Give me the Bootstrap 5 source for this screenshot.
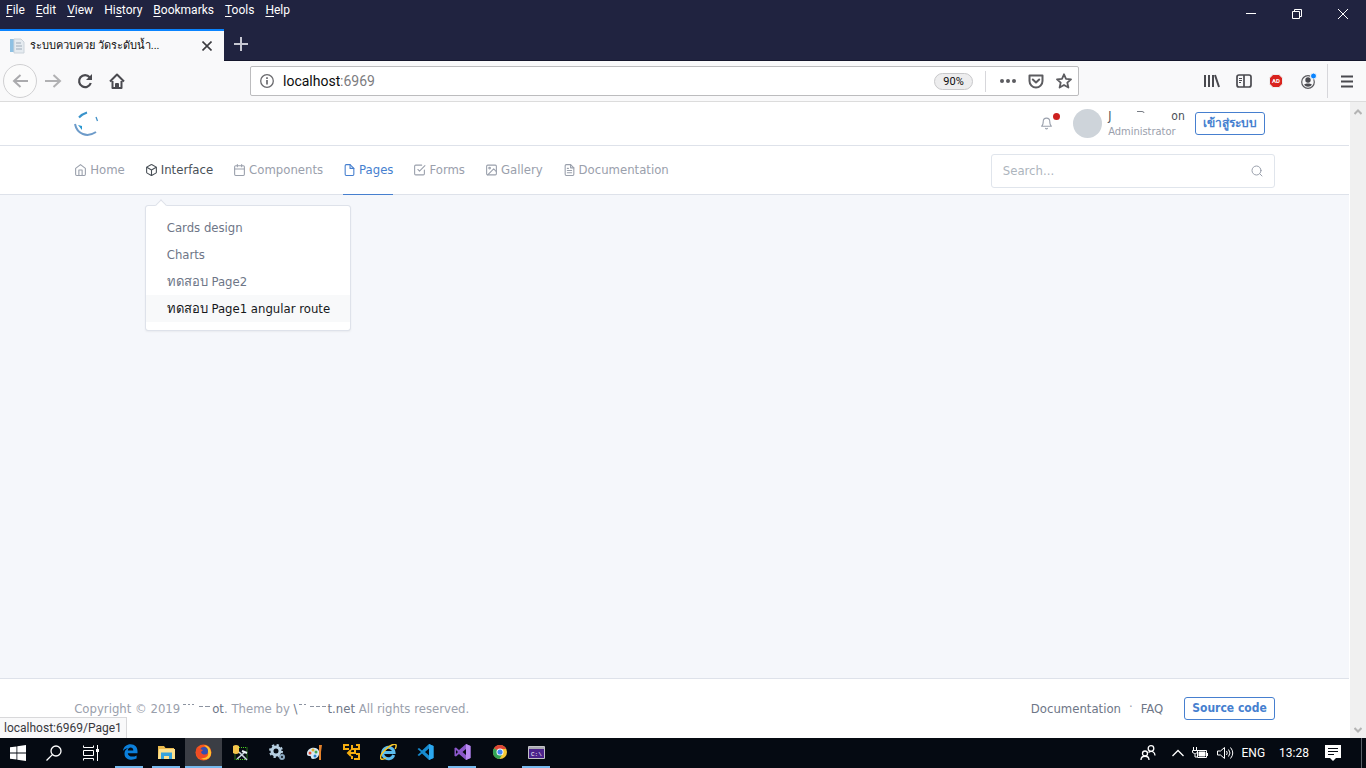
<!DOCTYPE html>
<html lang="en">
<head>
<meta charset="utf-8">
<meta name="viewport" content="width=device-width, initial-scale=1">
<title>ระบบควบควย วัดระดับน้ำ</title>
<link href="https://cdn.jsdelivr.net/npm/bootstrap@5.3.0/dist/css/bootstrap.min.css" rel="stylesheet">
<style>
:root{--ui:Roboto,"Open Sans",sans-serif;--page:"DejaVu Sans Condensed","DejaVu Sans",sans-serif;--blue:#467fcf;--line:#dee2ea;--mute:#9aa0ac;--ink:#6e7687}
body{font-family:var(--ui);font-size:12px;line-height:16px;color:#0c0c0d;overflow:hidden}
button{background:none;border:0;padding:0;color:inherit}
a{color:inherit;text-decoration:none}
svg{display:block;flex:none}
.line-ico{fill:none;stroke:currentColor;stroke-width:2;stroke-linecap:round;stroke-linejoin:round}
.titlebar{background:#202340;color:#fff;border-bottom:1px solid #14162c}
.menus{height:29px;padding:2px 6px;gap:11px}
.menus u{text-underline-offset:2px}
.winctl button{width:46px;height:28px}
.tab-on{width:224px;height:32px;background:#f9f9fa;border-top:2px solid #0a84ff;color:#0c0c0d;margin-bottom:-1px}
.tab-title{font-size:11px}
.new-tab{padding:0 10px}
.toolbar{height:41px;background:#f9f9fa;border-bottom:1px solid #dcdcdc;color:#4a4a4f}
.toolbar button{width:32px;height:32px}
.toolbar .back{width:34px;height:34px;margin-left:3px;border:1px solid #d0d0d2;border-radius:50%;background:#fbfbfb;color:#aaaaad}
.toolbar .forward{color:#b1b1b3}
.toolbar .burger{width:30px}
.tools{margin-left:117px}
.address{height:30px;margin-left:117px;border:1px solid #bcbcbe;border-radius:2px;background:#fff}
.address input{border:0;outline:0;min-width:0;font-size:14px;color:#0c0c0d;background:none;width:57px;padding:0}
.port{font-size:14px;color:#7c7c80}
.address button{width:28px;height:28px;color:#5c5c60}
.address .zoom-pill{width:39px;height:17px;border:1px solid #c8c8ca;border-radius:9px;background:#ededee;color:#0c0c0d;font-size:11px;line-height:15px}
.rule{width:1px;background:#d7d7db}
.tall{height:34px;margin-left:3px}
.viewport-area{font-family:var(--page);font-size:13px;color:#495057;background:#f5f7fb;min-height:0}
.wrap{max-width:1201px;width:89%;margin:0 auto}
.top-bar{height:44px;background:#fff;border-bottom:1px solid var(--line)}
.menu-bar{height:49px;background:#fff;border-bottom:1px solid var(--line)}
.main-nav{gap:20px;color:var(--mute)}
.main-nav .item{height:49px;gap:3px;border-bottom:1px solid transparent}
.main-nav .current{color:var(--blue);border-color:var(--blue)}
.main-nav .hovered{color:#495057}
.sub-menu{width:206px;top:59px;left:0;padding:8px 0;margin:0;border:1px solid var(--line);border-radius:3px;font-size:13px;box-shadow:0 1px 2px rgba(0,0,0,.05);color:var(--ink)}
.sub-menu a{display:block;height:27px;line-height:27px;padding:0 21px;white-space:nowrap}
.sub-menu a.over{background:#f8f9fa;color:#16181b}
.sub-menu::before{content:"";position:absolute;left:11px;top:-5px;width:8px;height:8px;background:#fff;border:solid var(--line);border-width:1px 0 0 1px;transform:rotate(45deg)}
.find{width:284px;height:34px;border:1px solid #e0e5ec;border-radius:3px;padding:0 11px}
.find input{border:0;outline:0;min-width:0;padding:0;color:#495057;font-size:13px}
.find input::placeholder{color:#adb5bd}
.gray{color:#9aa0ac}
.user{gap:6px;font-size:12px;line-height:15px}
.user small{font-size:11px;color:var(--mute);display:block}
.avatar-dot{width:29px;height:29px;background:#ced4da}
.alert-dot{width:7px;height:7px;background:#cd201f;right:-7px;top:-4px}
.edge-btn{height:23px;border:1px solid var(--blue);border-radius:3px;color:var(--blue);font-size:12px;font-weight:700;line-height:21px;padding:0 7px}
.sign-in{margin:0 10px}
.source{margin-left:21px}
.foot{height:60px;background:#fff;border-top:1px solid var(--line);color:var(--mute)}
.foot a{color:var(--ink)}
.hint{left:0;bottom:0;height:21px;line-height:21px;background:#f9f9fa;border:1px solid #d8d8da;border-width:1px 1px 0 0;padding:0 4px;font-family:var(--ui);font-size:12px;color:#38383d}
.scroller{width:17px;background:#f0f0f0;border-left:1px solid #fff;color:#b4b4b4;padding:6px 0 4px}
.taskbar{height:30px;background:#050a12;color:#fff}
.taskbar .sys{width:36px;height:30px}
.taskbar .apps{margin-left:3px}
.taskbar .app{width:37px;height:30px;border-bottom:2px solid transparent;position:relative}
.taskbar .app.open::after{content:"";position:absolute;left:4px;right:5px;bottom:-2px;height:2px;background:#76b9ed}
.taskbar .app.active{background:#3b3e45}
.taskbar .app.active::after{left:0;right:0}
.taskbar .app svg,.taskbar .sys svg{margin:0 auto}
.tray .clock{margin-left:14px}
.tray .peek{height:30px;margin:0 4px 0 20px;background:#596068}
</style>
</head>
<body class="vh-100 d-flex flex-column">
<svg width="0" height="0" class="position-absolute" aria-hidden="true">
<symbol id="home" viewBox="0 0 24 24"><path d="M3 9l9-7 9 7v11a2 2 0 0 1-2 2H5a2 2 0 0 1-2-2z"/><path d="M9 22V12h6v10"/></symbol>
<symbol id="box" viewBox="0 0 24 24"><path d="M21 16V8a2 2 0 0 0-1-1.73l-7-4a2 2 0 0 0-2 0l-7 4A2 2 0 0 0 3 8v8a2 2 0 0 0 1 1.73l7 4a2 2 0 0 0 2 0l7-4A2 2 0 0 0 21 16z"/><path d="M3.3 7L12 12l8.7-5M12 22V12"/></symbol>
<symbol id="cal" viewBox="0 0 24 24"><rect x="3" y="4" width="18" height="18" rx="2"/><path d="M16 2v4M8 2v4M3 10h18"/></symbol>
<symbol id="file" viewBox="0 0 24 24"><path d="M13 2H6a2 2 0 0 0-2 2v16a2 2 0 0 0 2 2h12a2 2 0 0 0 2-2V9z"/><path d="M13 2v7h7"/></symbol>
<symbol id="check" viewBox="0 0 24 24"><path d="M9 11l3 3L22 4"/><path d="M21 12v7a2 2 0 0 1-2 2H5a2 2 0 0 1-2-2V5a2 2 0 0 1 2-2h11"/></symbol>
<symbol id="pic" viewBox="0 0 24 24"><rect x="3" y="3" width="18" height="18" rx="2"/><circle cx="8.500" cy="8.500" r="1.500"/><path d="M21 15l-5-5L5 21"/></symbol>
<symbol id="doc" viewBox="0 0 24 24"><path d="M14 2H6a2 2 0 0 0-2 2v16a2 2 0 0 0 2 2h12a2 2 0 0 0 2-2V8z"/><path d="M14 2v6h6M16 13H8M16 17H8M10 9H8"/></symbol>
</svg>

<header class="titlebar">
  <div class="d-flex justify-content-between">
    <nav class="menus d-flex" aria-label="Application menu">
      <a href="#"><u>F</u>ile</a><a href="#"><u>E</u>dit</a><a href="#"><u>V</u>iew</a><a href="#">Hi<u>s</u>tory</a><a href="#"><u>B</u>ookmarks</a><a href="#"><u>T</u>ools</a><a href="#"><u>H</u>elp</a>
    </nav>
    <div class="winctl d-flex">
      <button aria-label="Minimize"><svg class="mx-auto" width="10" height="10" stroke="#fff"><path d="M0 4.500h10"/></svg></button>
      <button aria-label="Restore"><svg class="mx-auto" width="11" height="11" fill="none" stroke="#fff"><path d="M.5 2.500h7v7h-7zM2.500 2.500v-2h7v7h-2"/></svg></button>
      <button aria-label="Close"><svg class="mx-auto" width="11" height="11" stroke="#fff"><path d="M0 0l10 10M10 0L0 10"/></svg></button>
    </div>
  </div>
  <div class="d-flex align-items-center">
    <div class="tab-on d-flex align-items-center ps-2 pe-2">
      <svg class="me-1" width="18" height="18"><path d="M2 2h4v13H2z" fill="#8fc1e3"/><path d="M6 2h7l3 3v11H6z" fill="#e5ebf0" stroke="#cbd3da"/><path d="M8 6h5M8 9h6M8 12h6" stroke="#9eabb8"/></svg>
      <span class="tab-title flex-grow-1 text-nowrap">ระบบควบควย วัดระดับน้ำ...</span>
      <button class="p-1" aria-label="Close tab"><svg width="10" height="10" stroke="#3c3c40" stroke-width="1.600"><path d="M.5.5l9 9M9.500.5l-9 9"/></svg></button>
    </div>
    <button class="new-tab" aria-label="New tab"><svg width="15" height="15" stroke="#c6c7d2" stroke-width="2"><path d="M0 7h14M7 0v14"/></svg></button>
  </div>
</header>

<div class="toolbar d-flex align-items-center">
  <button class="back d-flex align-items-center justify-content-center" aria-label="Back"><svg width="17" height="16" fill="none" stroke="currentColor" stroke-width="2"><path d="M16 8H2M8.500 2L2 8l6.500 6"/></svg></button>
  <button class="forward d-flex align-items-center justify-content-center" aria-label="Forward"><svg width="17" height="16" fill="none" stroke="currentColor" stroke-width="2"><path d="M0 8h15M8.500 2L15 8l-6.500 6"/></svg></button>
  <button class="d-flex align-items-center justify-content-center" aria-label="Reload"><svg width="16" height="16" fill="none" stroke="currentColor" stroke-width="2.200"><path d="M12.700 4.200A6 6 0 1 0 13.800 10"/><path d="M15 1v6H9z" fill="currentColor" stroke="none"/></svg></button>
  <button class="d-flex align-items-center justify-content-center" aria-label="Home page"><svg width="16" height="16" fill="none" stroke="currentColor" stroke-width="2" stroke-linejoin="round"><path d="M1 8.500L8 1.500l7 7M3.500 8v7h9V8M7 15v-4h2v4"/></svg></button>
  <form class="address d-flex align-items-center flex-grow-1 ps-2" onsubmit="return false">
    <svg width="16" height="16"><circle cx="8" cy="8" r="6.300" fill="none" stroke="#6a6a6e" stroke-width="1.300"/><path d="M8 7v4.500M8 4.200v1.800" stroke="#6a6a6e" stroke-width="1.700"/></svg>
    <input class="ms-2" type="text" value="localhost" aria-label="Address"><span class="port flex-grow-1">:6969</span>
    <button class="zoom-pill me-2" type="button">90%</button>
    <span class="rule h-75 ms-1 me-2"></span>
    <button class="d-flex align-items-center justify-content-center" type="button" aria-label="Page actions"><svg width="16" height="6" fill="currentColor"><circle cx="2" cy="3" r="2"/><circle cx="8" cy="3" r="2"/><circle cx="14" cy="3" r="2"/></svg></button>
    <button class="d-flex align-items-center justify-content-center" type="button" aria-label="Pocket"><svg width="16" height="15" fill="none" stroke="currentColor" stroke-width="2" stroke-linejoin="round" stroke-linecap="round"><path d="M1.500 1.500h13V7a6.500 6.500 0 0 1-13 0zM4.800 5.500L8 8.500l3.200-3"/></svg></button>
    <button class="d-flex align-items-center justify-content-center" type="button" aria-label="Bookmark"><svg width="16" height="16" fill="none" stroke="currentColor" stroke-width="1.800" stroke-linejoin="round"><path d="M8 1.300l2 4.500 5 .5-3.700 3.300 1.100 4.900L8 12l-4.400 2.500 1.100-4.900L1 6.300l5-.5z"/></svg></button>
  </form>
  <div class="tools d-flex align-items-center">
    <button class="d-flex align-items-center justify-content-center" aria-label="Library"><svg width="16" height="14" fill="none" stroke="currentColor" stroke-width="2"><path d="M1 1v12M5 1v12M9 1v12M11 1l4 12"/></svg></button>
    <button class="d-flex align-items-center justify-content-center" aria-label="Sidebars"><svg width="16" height="14" fill="none" stroke="currentColor" stroke-width="1.700"><rect x="1" y="1" width="14" height="12" rx="2"/><path d="M8 1v12"/><path d="M3 4.500h3M3 6.500h3M3 8.500h2" stroke-width="1"/></svg></button>
    <button class="d-flex align-items-center justify-content-center" aria-label="Ad blocker"><svg width="14" height="14"><path d="M4 .5h6L13.500 4v6L10 13.500H4L.5 10V4z" fill="#d9231e" stroke="#eee"/><text x="7" y="9" font-size="6" font-weight="700" fill="#fff" text-anchor="middle">AD</text></svg></button>
    <button class="d-flex align-items-center justify-content-center" aria-label="Account"><svg width="17" height="17"><circle cx="8" cy="9" r="6.300" fill="none" stroke="#5a5a5e" stroke-width="1.200"/><circle cx="8" cy="7" r="2.700" fill="#4a4a4f"/><path d="M4 11.500c2-1.500 6-1.500 8 0-2 3-6 3-8 0z" fill="#4a4a4f"/><circle cx="13.500" cy="3" r="3" fill="#0a84ff" stroke="#f9f9fa"/></svg></button>
    <span class="rule tall"></span>
    <button class="burger d-flex align-items-center justify-content-center mx-1" aria-label="Open menu"><svg width="12" height="13" stroke="currentColor" stroke-width="2"><path d="M0 1.500h12M0 6.500h12M0 11.500h12"/></svg></button>
  </div>
</div>

<div class="viewport-area d-flex flex-grow-1 position-relative">
  <div class="flex-grow-1 d-flex flex-column">
    <div class="top-bar">
      <div class="wrap h-100 d-flex align-items-center justify-content-between">
        <a href="#" aria-label="Brand"><svg width="26" height="26" fill="none"><path d="M5 6.500Q8 3 13 1.500" stroke="#3a93cb" stroke-width="2"/><path d="M1 13c2 10 12 14 21 8" stroke="#6d9bc9" stroke-width="2"/><path d="M4 14l4 5v-4z" fill="#2997d0"/><path d="M22 6l1.500 4" stroke="#4090c8" stroke-width="1.300"/></svg></a>
        <div class="d-flex align-items-center">
          <a href="#" class="position-relative me-3" aria-label="Notifications"><svg class="line-ico gray" width="13" height="13" viewBox="0 0 24 24"><path d="M18 8A6 6 0 0 0 6 8c0 7-3 9-3 9h18s-3-2-3-9M13.700 21a2 2 0 0 1-3.400 0"/></svg><span class="alert-dot rounded-circle position-absolute"></span></a>
          <a href="#" class="user d-flex align-items-center ms-1"><span class="avatar-dot rounded-circle"></span><span><span class="d-flex align-items-center">J<svg width="60" height="12" fill="none" stroke="#777c84"><path d="M26 1.500h5q2 0 2 1.500"/></svg>on</span><small>Administrator</small></span></a>
          <button class="edge-btn sign-in" type="button">เข้าสู่ระบบ</button>
        </div>
      </div>
    </div>
    <div class="menu-bar">
      <div class="wrap d-flex align-items-center justify-content-between">
        <nav class="main-nav d-flex" aria-label="Main">
          <a class="item d-flex align-items-center" href="#"><svg class="line-ico" width="13" height="14"><use href="#home"/></svg>Home</a>
          <div class="position-relative">
            <a class="item hovered d-flex align-items-center" href="#"><svg class="line-ico" width="13" height="14"><use href="#box"/></svg>Interface</a>
            <div class="sub-menu dropdown-menu show">
              <a href="#">Cards design</a><a href="#">Charts</a><a href="#">ทดสอบ Page2</a><a class="over" href="#">ทดสอบ Page1 angular route</a>
            </div>
          </div>
          <a class="item d-flex align-items-center" href="#"><svg class="line-ico" width="13" height="14"><use href="#cal"/></svg>Components</a>
          <a class="item current d-flex align-items-center" href="#"><svg class="line-ico" width="13" height="14"><use href="#file"/></svg>Pages</a>
          <a class="item d-flex align-items-center" href="#"><svg class="line-ico" width="13" height="14"><use href="#check"/></svg>Forms</a>
          <a class="item d-flex align-items-center" href="#"><svg class="line-ico" width="13" height="14"><use href="#pic"/></svg>Gallery</a>
          <a class="item d-flex align-items-center" href="#"><svg class="line-ico" width="13" height="14"><use href="#doc"/></svg>Documentation</a>
        </nav>
        <form class="find d-flex align-items-center" onsubmit="return false"><input class="flex-grow-1" type="text" placeholder="Search..." aria-label="Search"><svg class="line-ico gray" width="12" height="12" viewBox="0 0 24 24"><circle cx="11" cy="11" r="9"/><path d="M22 22l-4.500-4.500"/></svg></form>
      </div>
    </div>
    <main class="flex-grow-1"></main>
    <footer class="foot">
      <div class="wrap h-100 d-flex align-items-center justify-content-between">
        <div class="d-flex align-items-center text-nowrap">Copyright © 2019 <a class="d-flex align-items-center" href="#"><svg width="32" height="12" stroke="#8c93a0"><path d="M3 1.500h3M8 1.500h2M12 1.500h2M19 3.500h4M25 3.500h5" /></svg>ot</a>.&nbsp;Theme by&nbsp;<a class="d-flex align-items-center" href="#">\<svg width="30" height="12" stroke="#8c93a0"><path d="M2 1.500h3M7 1.500h2M13 3.500h4M19 3.500h4M25 3.500h4"/></svg>t.net</a>&nbsp;All rights reserved.</div>
        <div class="d-flex align-items-center"><a href="#">Documentation</a><span class="px-2 pb-1">·</span><a href="#">FAQ</a><button class="edge-btn source" type="button">Source code</button></div>
      </div>
    </footer>
  </div>
  <div class="scroller d-flex flex-column justify-content-between align-items-center" aria-hidden="true">
    <svg width="8" height="8" fill="none" stroke="currentColor" stroke-width="2"><path d="M.5 6L4 2.500 7.500 6"/></svg>
    <svg width="8" height="8" fill="none" stroke="currentColor" stroke-width="2"><path d="M.5 2L4 5.500 7.500 2"/></svg>
  </div>
  <div class="hint position-absolute">localhost:6969/Page1</div>
</div>

<div class="taskbar d-flex justify-content-between">
  <div class="d-flex">
    <button class="sys" aria-label="Start"><svg width="16" height="16" fill="#fff"><path d="M0 2.300L6.500 1.400v6.200H0zM7.300 1.200L16 0v7.600H7.300zM0 8.400h6.500v6.200L0 13.700zM7.300 8.400H16V16l-8.700-1.200z"/></svg></button>
    <button class="sys" aria-label="Search Windows"><svg width="16" height="16" fill="none" stroke="#fff" stroke-width="1.300"><circle cx="10" cy="6" r="5"/><path d="M6.400 9.600L.5 15.500"/></svg></button>
    <button class="sys" aria-label="Task view"><svg width="17" height="16" fill="none" stroke="#fff"><path d="M1.500.5v2h10v-2M1.500 5.500h10v5h-10zM1.500 15.500v-2h10v2M15.500 0v16"/><path d="M14 4h3v3h-3z" fill="#fff" stroke="none"/></svg></button>
    <div class="apps d-flex">
    <button class="app open" aria-label="Edge"><svg width="16" height="16"><path d="M1 7C1.500 2.500 5 .3 8.500.3c4.600 0 7 3.200 7 7V9.200H5.800c.2 3.800 5.500 4.200 8.800 2.200v3.200C9.500 17 2.500 15.500 2.500 9.700c0-2.600 1.300-4.400 3.600-5.400C3.800 4.500 2 5.500 1 7zm4.800-.6h5.500c0-3.800-5.100-3.800-5.500 0z" fill="#0b7fdb"/></svg></button>
    <button class="app open" aria-label="File Explorer"><svg width="17" height="16"><path d="M0 2h6l1.500 2H16v11H0z" fill="#e9b94d"/><path d="M1 5h16v10H0z" fill="#fde08c"/><path d="M3 15V8.500h11V15h-3v-3H6v3z" fill="#36a3dc"/></svg></button>
    <button class="app open active" aria-label="Firefox"><svg width="17" height="17"><circle cx="8.500" cy="8.500" r="8" fill="#f4581f"/><path d="M9 1c7 1 9 9 5 13-3 2-6 2-8 0 5 1 8-2 7-6 0-3-2-5-4-7z" fill="#ffc52e"/><circle cx="9" cy="7" r="4" fill="#334fb0"/><path d="M1 7l1-4 3 2 3 1-2 2c1 3 4 3 6 2-1 3-4 5-7 4-3-1-4-4-4-7z" fill="#ee4b24"/></svg></button>
    <button class="app" aria-label="Tools"><svg width="17" height="17"><path d="M3 3.500h12v12H3z" fill="none" stroke="#49d321" stroke-dasharray="1 1"/><path d="M1 2q3-2 6 0v7q-3 2-6 0z" fill="#f4c54c"/><path d="M5 15l8-7M7 8l8 8" stroke="#cbd7e0" stroke-width="1.600"/><path d="M10 7l5 2" stroke="#edf4f8" stroke-width="2"/></svg></button>
    <button class="app" aria-label="Services"><svg width="17" height="17" fill="none"><circle cx="7" cy="7" r="4" stroke="#b7d0e2" stroke-width="3"/><circle cx="7" cy="7" r="6" stroke="#b7d0e2" stroke-width="2" stroke-dasharray="2.300 2.400"/><circle cx="13" cy="13" r="2" stroke="#8ba9c0" stroke-width="2"/></svg></button>
    <button class="app" aria-label="Paint"><svg width="17" height="17"><path d="M1 9c1-6 10-7 12-2 1 5-2 8-6 8-3 0-1-3-3-3-3 0-3-1-3-3z" fill="#d6e8f4"/><circle cx="4" cy="9" r="1.500" fill="#e84c31"/><circle cx="7" cy="6" r="1.500" fill="#e6b12e"/><circle cx="10" cy="8" r="1.500" fill="#44a751"/><circle cx="9" cy="12" r="1.500" fill="#2d80ca"/><path d="M13 1h3l-1 7v8h-2V8z" fill="#e4812a"/></svg></button>
    <button class="app" aria-label="Virtual machine"><svg width="17" height="16" fill="none" stroke="#f5ad0f" stroke-width="2"><path d="M6 1H1v4h5M9 1v4h7V1h-3M12 5v4H5M8 6L5 9l3 3M11 15h5v-5h-3M9 12v3"/></svg></button>
    <button class="app" aria-label="Internet Explorer"><svg width="17" height="17"><path d="M13.700 11A5.700 5.700 0 1 1 14 8.500H4" fill="none" stroke="#5bbdf0" stroke-width="3"/><path d="M1 15C-2 10 14-3 16 1q.6 1-.8 4M1 15q2 1 5-1" fill="none" stroke="#f4c62b" stroke-width="1.500"/></svg></button>
    <button class="app" aria-label="Visual Studio Code"><svg width="17" height="16"><path d="M12 0l4.500 2v12L12 16 5 9.500 2 12 .5 11 4 8 .5 5 2 4l3 2.500zM12 4.500L8 8l4 3.500z" fill="#178bd0"/><path d="M12 0l4.500 2v12L12 16z" fill="#2ca8ef"/></svg></button>
    <button class="app open" aria-label="Visual Studio"><svg width="17" height="16"><path d="M12 0l4.500 2v12L12 16 5 10l-3 2.500L.5 12V4L2 3.500 5 6zM12 5L8.500 8l3.500 3zM2 6v4l2-2z" fill="#8a57c9"/><path d="M12 0l4.500 2v12L12 16z" fill="#b98bf1"/></svg></button>
    <button class="app" aria-label="Chrome"><svg width="16" height="16"><circle cx="8" cy="8" r="7" fill="#f8c936"/><path d="M8 8L2 4.200a7 7 0 0 1 12.200.8H8z" fill="#df4637"/><path d="M8 8L2 4.200A7 7 0 0 0 7.500 15l3-5z" fill="#32a457"/><circle cx="8" cy="8" r="3.500" fill="#fff"/><circle cx="8" cy="8" r="2.600" fill="#4285f4"/></svg></button>
    <button class="app open" aria-label="Command prompt"><svg width="17" height="13"><path d="M.5.5h16v12H.5z" fill="#4b238b" stroke="#c3c3c7"/><path d="M1 1h15v2H1z" fill="#a9a9b2"/><text x="3" y="10" font-size="6" fill="#fff" font-family="Liberation Mono,monospace">C:\</text></svg></button>
    </div>
  </div>
  <div class="tray d-flex align-items-center">
    <svg width="16" height="16" fill="none" stroke="#fff" stroke-width="1.300"><circle cx="11" cy="3.500" r="2.800"/><circle cx="5" cy="8.500" r="2.500"/><path d="M1 15c0-5 8-5 8 0M8.500 7.500c3-2.500 6.500-.5 6.500 3"/></svg>
    <svg class="ms-3" width="12" height="8" fill="none" stroke="#fff" stroke-width="1.300"><path d="M.5 7L6 1.500 11.500 7"/></svg>
    <svg class="ms-2" width="17" height="13" fill="none" stroke="#fff"><path d="M5.500 3.500h9v7h-9zM15.500 6v3M1.500 0v3M4.500 0v3M.5 3.500h5v2l-2 1h-1l-2-1zM3 7v3h2"/><path d="M7 5h6v4H7z" fill="#fff"/></svg>
    <svg class="ms-2" width="17" height="14" fill="none" stroke="#fff"><path d="M.5 5h3L7.500 1.500v11L3.500 9h-3zM9.500 5q1.500 2 0 4M11.500 3.500q3 3.500 0 7M13.500 1.500q4.500 5.500 0 11"/></svg>
    <span class="ms-2">ENG</span><time class="clock">13:28</time>
    <button class="ms-3" aria-label="Notification centre"><svg width="16" height="16"><path d="M0 0h16v13H11l-3 3-3-3H0z" fill="#fff"/><path d="M3 3.500h10M3 6.500h10M3 9.500h6" stroke="#050a12"/></svg></button>
    <span class="rule peek"></span>
  </div>
</div>
<script src="https://cdn.jsdelivr.net/npm/bootstrap@5.3.0/dist/js/bootstrap.bundle.min.js"></script>
</body>
</html>
